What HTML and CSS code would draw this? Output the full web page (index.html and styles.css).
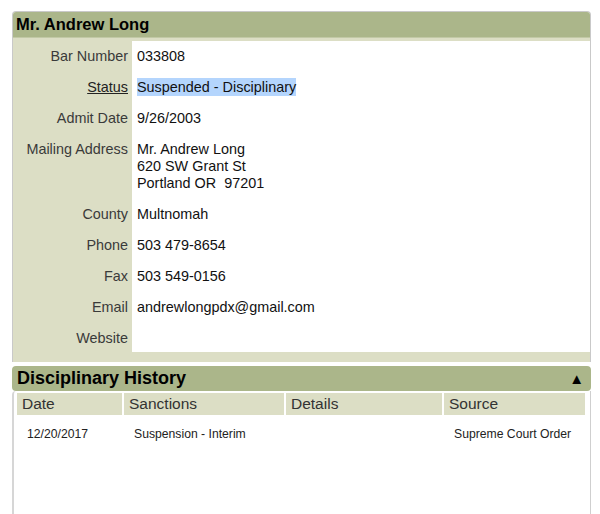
FILE: index.html
```html
<!DOCTYPE html>
<html lang="en">
<head>
    <meta charset="UTF-8">
    <meta name="viewport" content="width=device-width, initial-scale=1.0">
    <title>Mr. Andrew Long</title>
    <link rel="stylesheet" href="styles.css">
</head>
<body>
    <div class="page">
        <div class="panel">
            <div class="panel-head">Mr. Andrew Long</div>
            <div class="panel-body">
                <table class="info">
                    <tr><th>Bar Number</th><td>033808</td></tr>
                    <tr><th><a href="#">Status</a></th><td><span class="selected">Suspended - Disciplinary</span></td></tr>
                    <tr><th>Admit Date</th><td>9/26/2003</td></tr>
                    <tr><th>Mailing Address</th><td>Mr. Andrew Long<br>620 SW Grant St<br>Portland OR&nbsp; 97201</td></tr>
                    <tr><th>County</th><td>Multnomah</td></tr>
                    <tr><th>Phone</th><td>503 479-8654</td></tr>
                    <tr><th>Fax</th><td>503 549-0156</td></tr>
                    <tr><th>Email</th><td>andrewlongpdx@gmail.com</td></tr>
                    <tr><th>Website</th><td></td></tr>
                </table>
            </div>
        </div>

        <div class="section">
            <div class="section-head">
                <span>Disciplinary History</span>
                <span class="toggle">&#9650;</span>
            </div>
            <div class="section-body">
                <table class="history">
                    <thead>
                        <tr>
                            <th class="col-date">Date</th>
                            <th class="col-sanction">Sanctions</th>
                            <th class="col-details">Details</th>
                            <th class="col-source">Source</th>
                        </tr>
                    </thead>
                    <tbody>
                        <tr>
                            <td>12/20/2017</td>
                            <td>Suspension - Interim</td>
                            <td></td>
                            <td>Supreme Court Order</td>
                        </tr>
                    </tbody>
                </table>
            </div>
        </div>
    </div>
</body>
</html>
```

FILE: styles.css
```css
body {
    margin: 0;
    background: #fff;
    font-family: "Liberation Sans", Arial, sans-serif;
    color: #000;
}
.page {
    width: 579px;
    padding: 11px 0 0 12px;
}

/* attorney panel */
.panel {
    border: 1px solid #c9c9c9;
    border-bottom: none;
    border-radius: 4px 4px 0 0;
    overflow: hidden;
}
.panel-head {
    background: #abb68a;
    height: 25px;
    line-height: 25px;
    padding-left: 3px;
    font-size: 16.5px;
    font-weight: bold;
    border-bottom: 1px solid #c2c9a6;
}
.panel-body {
    background: #dcdec5;
    padding: 3px 0 10px 0;
}
.info {
    width: 100%;
    border-collapse: collapse;
    font-size: 14.4px;
    line-height: 17px;
}
.info th {
    width: 115px;
    padding: 7px 4px 7px 0;
    text-align: right;
    vertical-align: top;
    font-weight: normal;
    color: #3a3a3a;
    white-space: nowrap;
}
.info th a {
    color: #222;
    text-decoration: underline;
}
.info td {
    background: #fff;
    padding: 7px 5px;
    vertical-align: top;
    color: #111;
}
.info tr:last-child td,
.info tr:last-child th {
    padding-bottom: 5px;
}
.selected {
    background: #b4d5fd;
    padding: 1px 0;
}

/* disciplinary history */
.section {
    margin-top: 4px;
}
.section-head {
    display: flex;
    justify-content: space-between;
    align-items: center;
    background: #abb68a;
    height: 25px;
    padding: 0 7px 0 5px;
    border-radius: 4px;
    font-size: 18px;
    font-weight: bold;
}
.toggle {
    font-size: 15px;
}
.section-body {
    border-left: 2px solid #d6d6d6;
    border-right: 1px solid #cfcfcf;
    border-top-left-radius: 4px;
    padding: 2px 0 0 3px;
    height: 130px;
}
.history {
    width: calc(100% - 1px);
    border-collapse: separate;
    border-spacing: 2px 0;
    margin-left: -2px;
    table-layout: fixed;
}
.history th {
    background: #dcdec5;
    text-align: left;
    font-weight: normal;
    font-size: 15.5px;
    color: #333;
    height: 22px;
    padding: 0 5px;
}
.history td {
    font-size: 12.2px;
    color: #222;
    padding: 12px 10px 0 10px;
}
.col-date { width: 95px; }
.col-sanction { width: 150px; }
.col-details { width: 146px; }
```
